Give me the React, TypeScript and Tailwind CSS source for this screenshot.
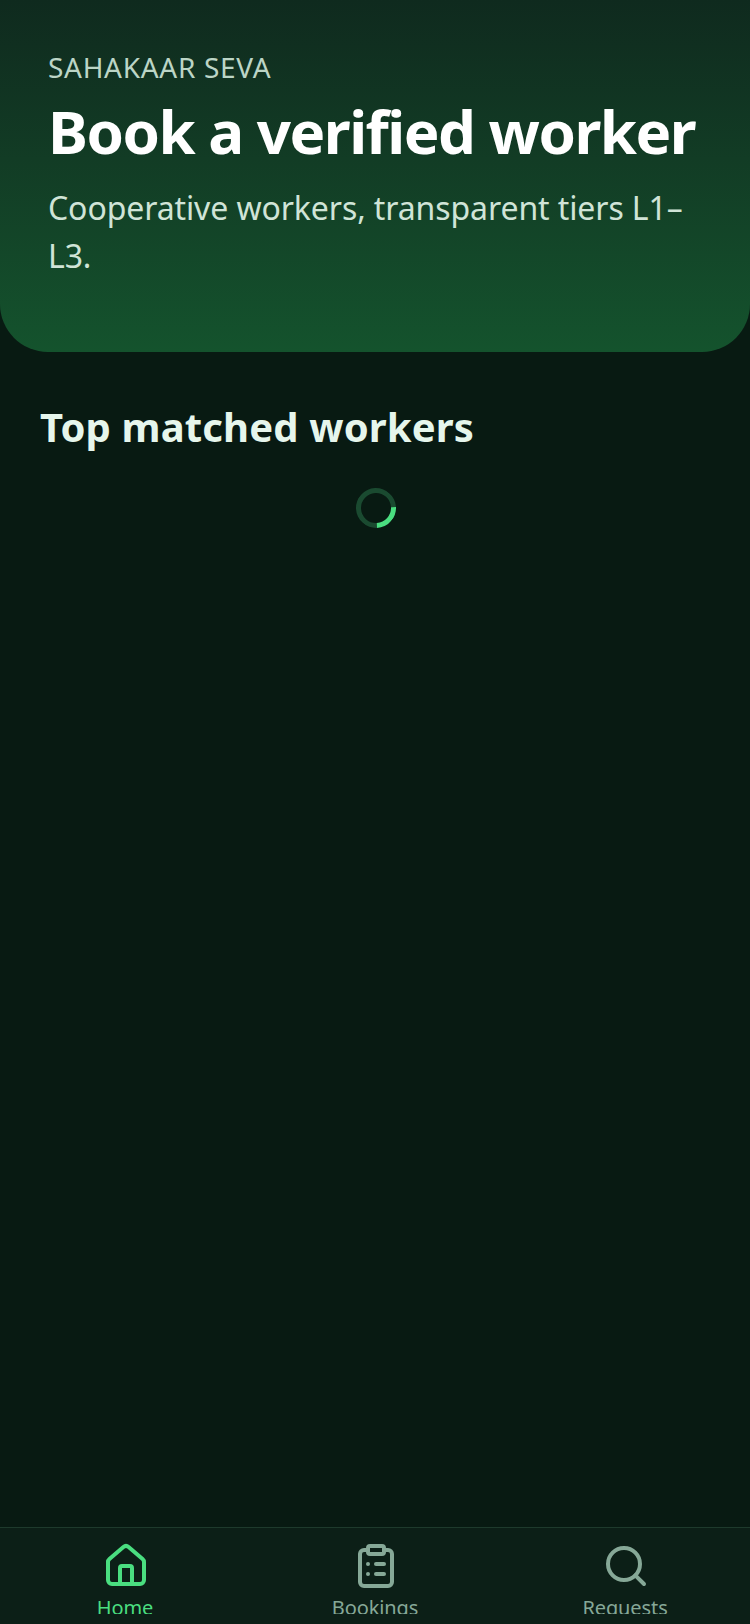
import { House, ClipboardList, Search } from 'lucide-react'

const tabs = [
  { label: 'Home', Icon: House, active: true },
  { label: 'Bookings', Icon: ClipboardList, active: false },
  { label: 'Requests', Icon: Search, active: false },
]

export default function App() {
  return (
    <div className="flex h-[1624px] w-[750px] flex-col overflow-hidden bg-[#081a12] font-['Noto_Sans',sans-serif]">
      {/* HEADER */}
      <header className="h-[352px] rounded-b-[48px] bg-gradient-to-b from-[#0f2a1e] to-[#14532d] px-12 pt-[47px]">
        <p className="text-[28px] leading-[40px] tracking-[0.7px] text-[#bcd5c6]">SAHAKAAR SEVA</p>
        <h1 className="mt-[8px] text-[60px] leading-[72px] font-bold tracking-[-1.5px] whitespace-nowrap text-white">
          Book a verified worker
        </h1>
        <p className="mt-[17px] text-[32px] leading-[48px] tracking-[-0.1px] text-[#d0e4d7]">
          Cooperative workers, transparent tiers L1–L3.
        </p>
      </header>

      {/* CONTENT */}
      <main className="flex-1 px-10 pt-[47px]">
        <h2 className="text-[40px] leading-[56px] font-bold tracking-[0.15px] text-[#e6f6ec]">Top matched workers</h2>
        <div className="mt-[33px] ml-[1px] flex justify-center">
          <div className="h-10 w-10 rotate-[42deg] rounded-full border-[5px] border-[#1a4a30] border-r-[#4ade80]" />
        </div>
      </main>

      {/* TABS */}
      <nav className="flex h-[97px] overflow-hidden border-t border-[#1e3a2c] bg-[#0c1f17]">
        {tabs.map(({ label, Icon, active }) => (
          <div key={label} className="flex flex-1 flex-col items-center pt-[14px]">
            <Icon size={48} strokeWidth={2} className={`ml-[1px] ${active ? 'text-[#4ade80]' : 'text-[#86a897]'}`} />
            <span className={`mt-[2px] h-[22px] overflow-hidden text-[20px] leading-[32px] tracking-[-0.1px] ${active ? 'text-[#4ade80]' : 'text-[#86a897]'}`}>
              {label}
            </span>
          </div>
        ))}
      </nav>
    </div>
  )
}
